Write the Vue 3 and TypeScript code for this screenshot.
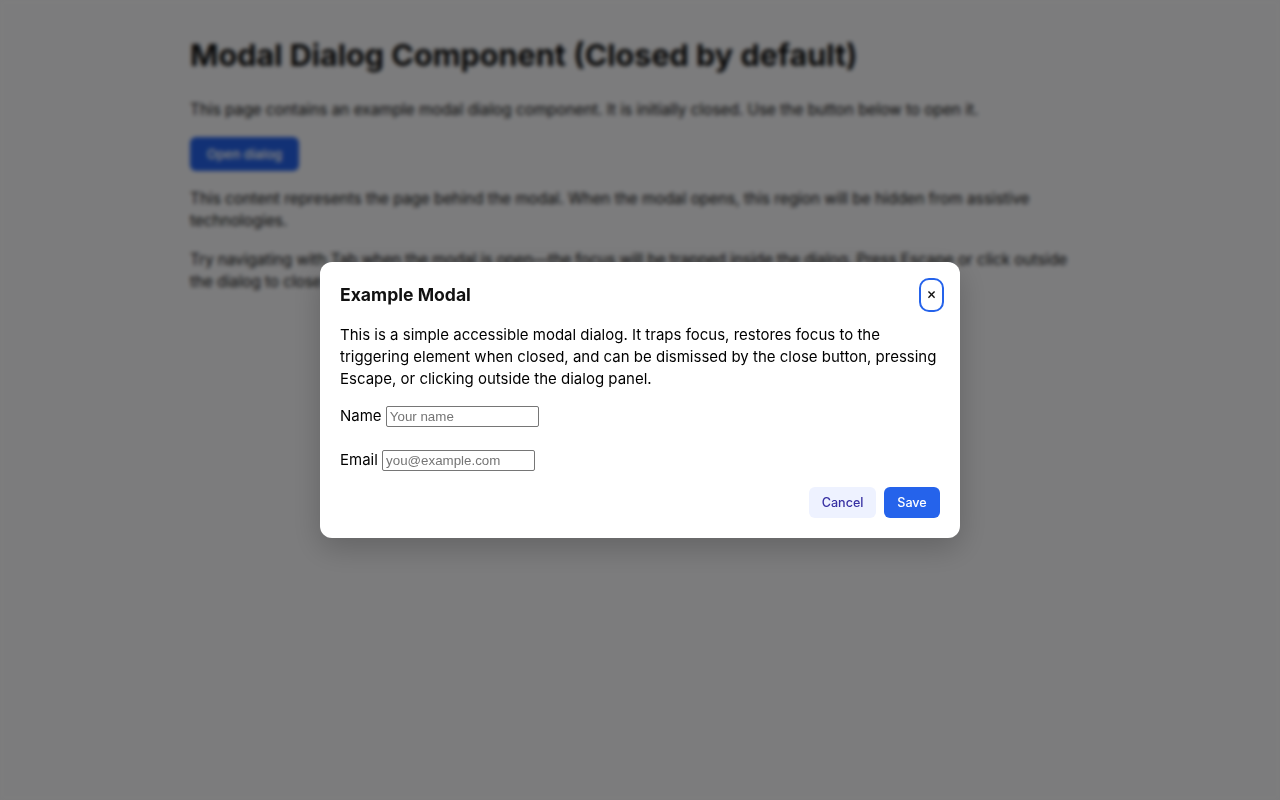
<script setup lang="ts">
const title = 'Example Modal'
</script>

<template>
  <main class="page">
    <h1>Modal Dialog Component (Closed by default)</h1>
    <p>This page contains an example modal dialog component. It is initially closed. Use the button below to open it.</p>
    <button class="open" type="button" tabindex="-1">Open dialog</button>
    <p>This content represents the page behind the modal. When the modal opens, this region will be hidden from assistive technologies.</p>
    <p class="tight">Try navigating with Tab when the modal is open—the focus will be trapped inside the dialog. Press Escape or click outside the dialog to close it.</p>
  </main>
  <div class="backdrop">
    <section class="dialog" role="dialog" aria-modal="true">
      <header class="head">
        <h2>{{ title }}</h2>
        <button class="close" type="button" aria-label="Close">×</button>
      </header>
      <p class="desc">This is a simple accessible modal dialog. It traps focus, restores focus to the triggering element when closed, and can be dismissed by the close button, pressing Escape, or clicking outside the dialog panel.</p>
      <div class="field"><label for="n">Name</label> <input id="n" type="text" placeholder="Your name" /></div>
      <div class="field"><label for="e">Email</label> <input id="e" type="email" placeholder="you@example.com" /></div>
      <footer class="actions">
        <button class="btn cancel" type="button">Cancel</button>
        <button class="btn save" type="button">Save</button>
      </footer>
    </section>
  </div>
</template>

<style>
body { background: #f9f9fb; }
</style>

<style scoped>
.page {
  width: 900px;
  margin: 0 auto;
  padding: 32px 0;
  font-family: Inter, sans-serif;
  font-size: 15.33px;
  line-height: 22px;
  color: #111;
}
h1 {
  margin: 0 0 22px;
  font-size: 30.55px;
  line-height: 45px;
  font-weight: 700;
}
.page p { margin: 0 0 16px; }
.page .open + p { margin-bottom: 17px; }
.page .tight { letter-spacing: -0.055px; }
.open {
  display: block;
  height: 34px;
  width: 109px;
  margin: 0 0 17px;
  padding: 0;
  border: 0;
  border-radius: 6px;
  background: #2563eb;
  color: #fff;
  font: 600 13px Inter, sans-serif;
}
.backdrop {
  position: fixed;
  inset: 0;
  display: flex;
  align-items: center;
  justify-content: center;
  background: rgba(0, 0, 0, 0.5);
  backdrop-filter: blur(2px);
}
.dialog {
  box-sizing: border-box;
  width: 640px;
  padding: 16px 20px 20px;
  background: #fff;
  border-radius: 12px;
  box-shadow: 0 10px 30px rgba(0, 0, 0, 0.2);
  font-family: Inter, sans-serif;
  font-size: 15px;
  line-height: 22px;
  color: #000;
}
.head {
  display: flex;
  align-items: center;
  justify-content: space-between;
  margin-bottom: 12px;
}
h2 { margin: 0; padding-bottom: 2px; font-size: 17.6px; line-height: 25px; font-weight: 700; color: #111; }
.close {
  box-sizing: border-box;
  width: 25px;
  height: 34px;
  margin-right: -4px;
  padding: 0 0 4px;
  background: #fff;
  border: 2px solid #2563eb;
  border-radius: 10px;
  font: 500 15px Inter, sans-serif;
  color: #111;
}
.desc { margin: 0 0 15px; }
.field { height: 28px; margin-bottom: 16px; }
.field:last-of-type { margin-bottom: 10px; }
.field input {
  box-sizing: border-box;
  width: 153px;
  height: 21px;
  padding: 1px 3px;
  border: 1px solid #767676;
  border-radius: 2px;
  font: 13.33px "Liberation Sans", Arial, sans-serif;
  vertical-align: baseline;
}
.actions { display: flex; justify-content: flex-end; gap: 8px; }
.btn {
  height: 31px;
  padding: 0 13px;
  border: 0;
  border-radius: 6px;
  font: 500 12.6px Inter, sans-serif;
}
.cancel { background: #eef2ff; color: #3730a3; padding: 0 12.5px; }
.save { background: #2563eb; color: #fff; min-width: 56px; }
</style>
